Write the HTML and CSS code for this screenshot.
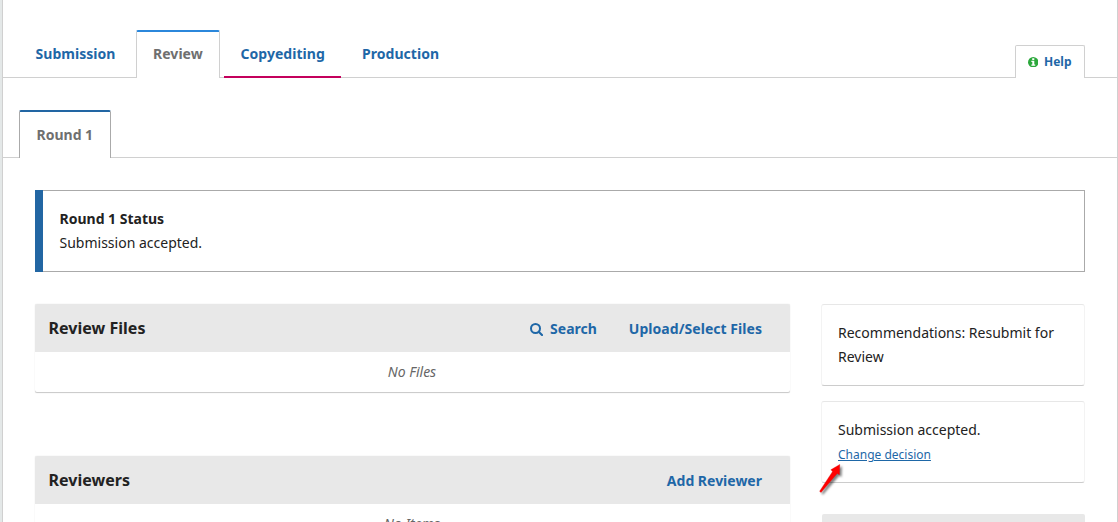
FILE: index.html
```html
<!DOCTYPE html>
<html lang="en">
<head>
<meta charset="utf-8">
<title>Submission workflow</title>
<link rel="stylesheet" href="styles.css">
</head>
<body>
<main class="workflow">
  <nav class="stages">
    <a class="stage">Submission</a>
    <a class="stage stage-active">Review</a>
    <a class="stage stage-current">Copyediting</a>
    <a class="stage">Production</a>
    <a class="help"><svg class="help-icon" viewBox="0 0 10 10"><circle cx="5" cy="5" r="5" fill="#2ba83b"/><path d="M4 1.1h2v1.7H4zM3.2 3.5H6v3.6h.9v1.3H3.2V7.1h.9V4.8h-.9z" fill="#fff"/></svg>Help</a>
  </nav>
  <nav class="rounds"><a class="round">Round 1</a></nav>
  <section class="status">
    <strong>Round 1 Status</strong>
    <p>Submission accepted.</p>
  </section>
  <div class="columns">
    <div class="primary">
      <section class="grid">
        <header class="grid-head">
          <h2>Review Files</h2>
          <a class="search"><svg class="search-icon" viewBox="0 0 13 13"><circle cx="5.5" cy="5.5" r="4.5" fill="none" stroke="currentColor" stroke-width="2"/><path d="M8.7 8.7 12 12" stroke="currentColor" stroke-width="2.1" stroke-linecap="round"/></svg>Search</a>
          <a class="upload">Upload/Select Files</a>
        </header>
        <p class="empty">No Files</p>
      </section>
      <section class="grid">
        <header class="grid-head">
          <h2>Reviewers</h2>
          <a>Add Reviewer</a>
        </header>
        <p class="empty">No Items</p>
      </section>
    </div>
    <aside class="side">
      <div class="card">Recommendations: Resubmit for Review</div>
      <div class="card">Submission accepted.
        <a class="change">Change decision</a>
        <svg class="pointer" viewBox="0 0 32 36"><path d="M2.6 31.2 15.6 11.4 13.8 9.8 22.8 4.4 22.4 14.8 20.2 13.6 4 32.6z" fill="#f00" stroke="#d00000" stroke-width=".3"/></svg>
      </div>
      <div class="participants"></div>
    </aside>
  </div>
</main>
</body>
</html>
```
FILE: styles.css
```css
* { box-sizing: border-box; }

body {
  margin: 0;
  height: 522px;
  overflow: hidden;
  background: #e4e8e8;
  color: #222;
  font: 14px/24px "Noto Sans", sans-serif;
}

p, h2 { margin: 0; }
a { color: #1e67a7; }

.workflow {
  height: 522px;
  margin-left: 2px;
  overflow: hidden;
  background: #fff;
  border: solid #d0d0d0;
  border-width: 0 1px;
}

.stages {
  display: flex;
  align-items: flex-end;
  height: 78px;
  padding: 0 32px 0 16px;
  background: linear-gradient(#d0d0d0, #d0d0d0) bottom / 100% 1px no-repeat;
  font-weight: 700;
}

.stage {
  height: 48px;
  padding: 12px 16px 0 16.5px;
  margin-right: 4.5px;
  letter-spacing: .04px;
}

.stage-active {
  width: 84px;
  padding: 10px 0 0 16px;
  margin-right: 4px;
  color: #6f6f6f;
  background: #fff;
  border: 1px solid #d0d0d0;
  border-top: 2px solid #2b87db;
  border-bottom: 0;
  border-radius: 2px 2px 0 0;
}

.stage-current {
  width: 117px;
  border-bottom: 2px solid #c4005c;
}

.help {
  display: flex;
  align-items: center;
  width: 70px;
  height: 33px;
  margin-left: auto;
  padding-left: 11.5px;
  gap: 6px;
  background: #fff;
  border: 1px solid #d0d0d0;
  border-bottom: 0;
  border-radius: 2px 2px 0 0;
  font-size: 12px;
}

.help-icon { width: 10.5px; height: 10.5px; }

.rounds {
  height: 80px;
  padding: 32px 16px 0;
  background: linear-gradient(#d0d0d0, #d0d0d0) bottom / 100% 1px no-repeat;
}

.round {
  display: block;
  width: 92px;
  height: 48px;
  padding: 11px 0 0 16.5px;
  background: #fff;
  border: 1px solid #aaa;
  border-top: 2px solid #2266a3;
  border-bottom: 0;
  border-radius: 2px 2px 0 0;
  color: #6f6f6f;
  font-weight: 700;
}

.status {
  position: relative;
  height: 82px;
  margin: 32px;
  padding: 16px 16px 16px 23.5px;
  border: 1px solid #aaa;
}

.status::before {
  content: "";
  position: absolute;
  inset: -1px auto -1px -1px;
  width: 8px;
  background: #2266a3;
}

.columns {
  display: grid;
  grid-template-columns: 755px 263px;
  column-gap: 32px;
  padding-left: 32px;
}

.grid {
  margin-bottom: 63px;
  border-radius: 2px;
  box-shadow: 0 0 1px rgba(0, 0, 0, .22), inset 0 -1px #ccc;
}

.grid-head {
  display: flex;
  align-items: center;
  height: 48px;
  padding: 0 28px 0 13.5px;
  gap: 32px;
  background: #e8e8e8;
  border-radius: 2px 2px 0 0;
  font-weight: 700;
}

.grid-head a { padding-top: 2px; }
.grid-head h2 { margin-right: auto; font-size: 16px; line-height: 24px; letter-spacing: .03px; }
.search { display: flex; align-items: center; gap: 7px; }
.search-icon { width: 13px; height: 13px; }
.upload { letter-spacing: .04px; }

.empty {
  height: 41px;
  padding: 8px 1px 0 0;
  color: #666;
  font-style: italic;
  text-align: center;
}

.card {
  position: relative;
  height: 82px;
  margin: 0 0 15px -1px;
  padding: 16px 15px 16px 16px;
  border: 1px solid #f3f3f3;
  border-top-color: #e7e7e7;
  border-bottom-color: #ccc;
  border-radius: 3px;
}

.change {
  display: block;
  padding-top: 1px;
  font-size: 12px;
  line-height: 24px;
  text-decoration: underline;
}

.pointer {
  position: absolute;
  left: -5px;
  top: 58px;
  width: 32px;
  height: 36px;
  filter: drop-shadow(2px 2px 1px rgba(0, 0, 0, .5));
}

.participants {
  height: 48px;
  margin-top: 31px;
  background: #e8e8e8;
  border-radius: 2px;
}
```
